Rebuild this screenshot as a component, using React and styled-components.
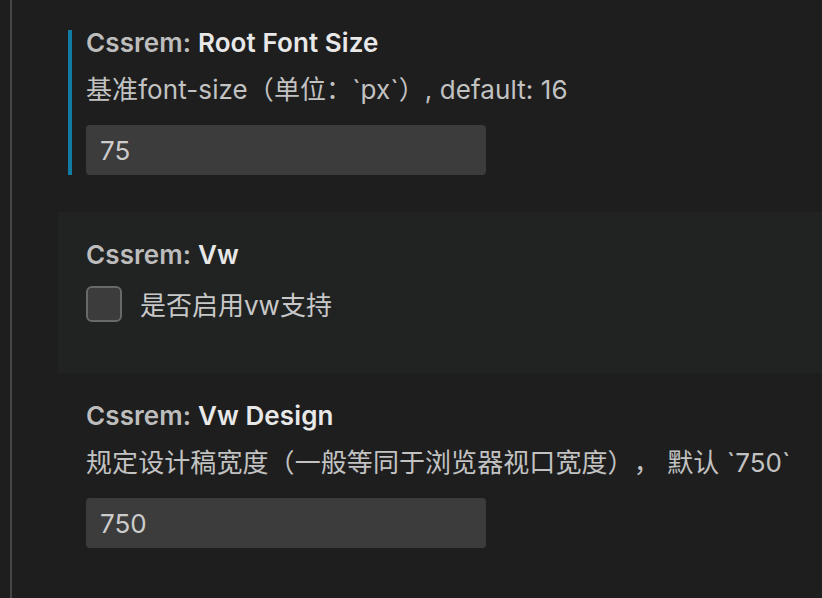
import React from 'react'
import styled, { createGlobalStyle } from 'styled-components'

const GlobalStyle = createGlobalStyle`
  body {
    margin: 0;
    background: #1e1e1e;
    font-family: Inter, "Noto Sans CJK SC", sans-serif;
    -webkit-font-smoothing: antialiased;
    text-spacing-trim: space-all;
  }
`

const Page = styled.div`
  padding-left: 10px;
  height: 598px;
  overflow: hidden;
`

const Column = styled.div`
  border-left: 2px solid #464646;
  padding-left: 46px;
  height: 100%;
`

const Item = styled.div`
  padding: 30px 0 37px 10px;
  background: ${(p) => (p.hover ? '#212323' : 'transparent')};
`

const Row = styled.div`
  border-left: 4px solid ${(p) => (p.focused ? '#127ba3' : 'transparent')};
  padding-left: 14px;
`

const Title = styled.div`
  font-size: 26px;
  line-height: 26px;
  font-weight: 600;
  color: #bdbdbd;
  letter-spacing: 0.1px;

  b {
    font-weight: 600;
    color: #e8e8e8;
  }
`

const Description = styled.div`
  margin-top: 21px;
  font-size: 26px;
  line-height: 26px;
  color: #c2c2c2;
  letter-spacing: 0.08px;
`

const Input = styled.div`
  margin-top: 22px;
  width: 400px;
  height: 50px;
  box-sizing: border-box;
  padding: 0 14px;
  background: #3c3c3c;
  border-radius: 4px;
  display: flex;
  align-items: center;
  font-size: 26px;
  color: #cccccc;
`

const CheckRow = styled.label`
  margin-top: 17px;
  padding-bottom: 14px;
  display: flex;
  align-items: center;
  gap: 18px;
  font-size: 26px;
  color: #c8c8c8;
`

const Box = styled.span`
  width: 36px;
  height: 36px;
  box-sizing: border-box;
  border: 2px solid #696969;
  border-radius: 6px;
  background: #3c3c3c;
`

export default function App() {
  return (
    <>
      <GlobalStyle />
      <Page>
        <Column>
          <Item>
            <Row focused>
              <Title>
                Cssrem: <b>Root Font Size</b>
              </Title>
              <Description>基准font-size（单位：`px`）, default: 16</Description>
              <Input>75</Input>
            </Row>
          </Item>
          <Item hover>
            <Row>
              <Title>
                Cssrem: <b>Vw</b>
              </Title>
              <CheckRow>
                <Box />
                是否启用vw支持
              </CheckRow>
            </Row>
          </Item>
          <Item>
            <Row>
              <Title>
                Cssrem: <b>Vw Design</b>
              </Title>
              <Description>规定设计稿宽度（一般等同于浏览器视口宽度）， 默认 `750`</Description>
              <Input>750</Input>
            </Row>
          </Item>
        </Column>
      </Page>
    </>
  )
}
